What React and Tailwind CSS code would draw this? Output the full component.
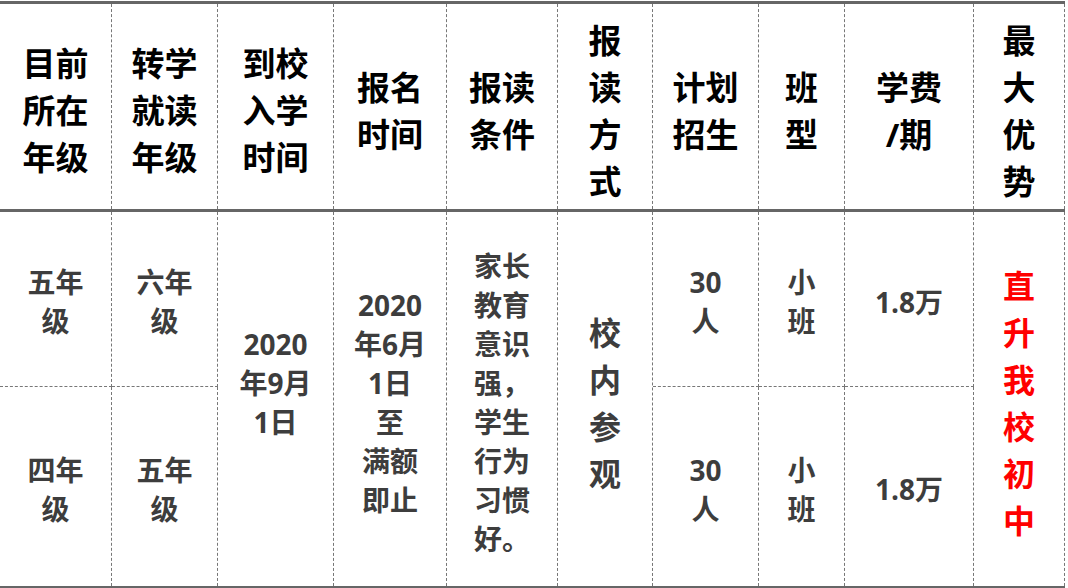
const head = [
  ["目前", "所在", "年级"],
  ["转学", "就读", "年级"],
  ["到校", "入学", "时间"],
  ["报名", "时间"],
  ["报读", "条件"],
  ["报", "读", "方", "式"],
  ["计划", "招生"],
  ["班", "型"],
  ["学费", "/期"],
  ["最", "大", "优", "势"],
];

const font = "font-['Open_Sans','Noto_Sans_CJK_SC',sans-serif]";
const cell = "flex items-center justify-center text-center border-r border-dashed border-[#777]";

function Lines({ items }) {
  return (
    <div>
      {items.map((t, i) => (
        <div key={i}>{t}</div>
      ))}
    </div>
  );
}

export default function App() {
  return (
    <div className={`w-[1068px] h-[588px] bg-white pt-px ${font}`}>
      <div className="w-[1065px]">
        {/* 表头 */}
        <div className="grid grid-cols-[112px_106px_116px_113px_111px_95px_106px_86px_129px_91px] h-[211px] border-y-[3px] border-solid border-[#666] text-[33px] leading-[47px] font-bold text-black">
          {head.map((h, i) => (
            <div key={i} className={`${cell} pt-[8px]`}>
              <Lines items={h} />
            </div>
          ))}
        </div>

        {/* 内容 */}
        <div className="grid grid-cols-[112px_106px_116px_113px_111px_95px_106px_86px_129px_91px] grid-rows-[175px_199px] border-b-2 border-solid border-[#666] text-[28px] leading-[39px] font-bold text-[#3d3d3d]">
          <div className={`${cell} col-start-1 row-start-1 border-b pt-[6px]`}>
            <Lines items={["五年", "级"]} />
          </div>
          <div className={`${cell} col-start-2 row-start-1 border-b pt-[6px]`}>
            <Lines items={["六年", "级"]} />
          </div>
          <div className={`${cell} col-start-3 row-start-1 row-span-2 pb-[32px]`}>
            <Lines items={["2020", "年9月", "1日"]} />
          </div>
          <div className={`${cell} col-start-4 row-start-1 row-span-2 pt-[8px]`}>
            <Lines items={["2020", "年6月", "1日", "至", "满额", "即止"]} />
          </div>
          <div className={`${cell} col-start-5 row-start-1 row-span-2 pt-[8px]`}>
            <Lines items={["家长", "教育", "意识", "强，", "学生", "行为", "习惯", "好。"]} />
          </div>
          <div className={`${cell} col-start-6 row-start-1 row-span-2 pt-[8px] text-[32px] leading-[47px]`}>
            <Lines items={["校", "内", "参", "观"]} />
          </div>
          <div className={`${cell} col-start-7 row-start-1 border-b pt-[6px]`}>
            <Lines items={["30", "人"]} />
          </div>
          <div className={`${cell} col-start-8 row-start-1 border-b pt-[6px]`}>
            <Lines items={["小", "班"]} />
          </div>
          <div className={`${cell} col-start-9 row-start-1 border-b pt-[6px]`}>
            <span>1.8万</span>
          </div>
          <div className={`${cell} col-start-10 row-start-1 row-span-2 pt-[8px] text-[32px] leading-[47px] text-[#f00]`}>
            <Lines items={["直", "升", "我", "校", "初", "中"]} />
          </div>

          <div className={`${cell} col-start-1 row-start-2 pt-[6px]`}>
            <Lines items={["四年", "级"]} />
          </div>
          <div className={`${cell} col-start-2 row-start-2 pt-[6px]`}>
            <Lines items={["五年", "级"]} />
          </div>
          <div className={`${cell} col-start-7 row-start-2 pt-[6px]`}>
            <Lines items={["30", "人"]} />
          </div>
          <div className={`${cell} col-start-8 row-start-2 pt-[6px]`}>
            <Lines items={["小", "班"]} />
          </div>
          <div className={`${cell} col-start-9 row-start-2 pt-[6px]`}>
            <span>1.8万</span>
          </div>
        </div>
      </div>
    </div>
  );
}
